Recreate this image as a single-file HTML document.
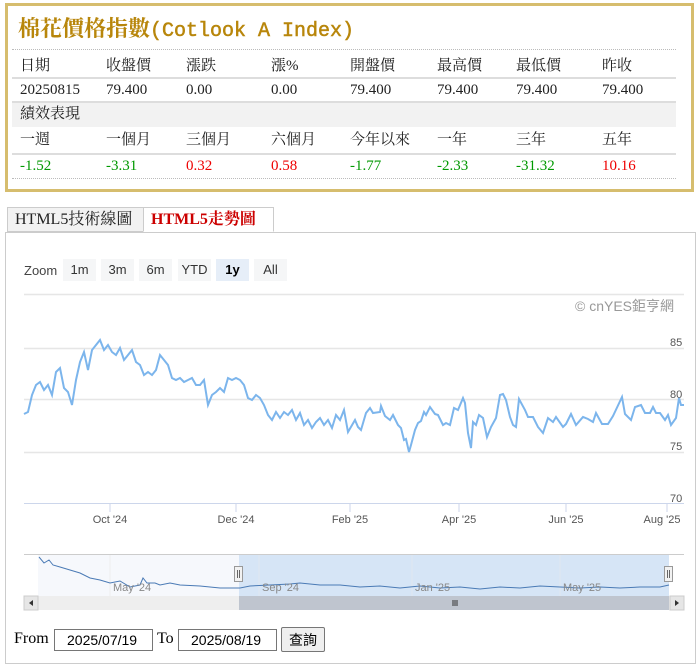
<!DOCTYPE html>
<html><head><meta charset="utf-8"><style>
body{margin:0;width:696px;height:652px;background:#fff;font-family:"Liberation Serif","Noto Serif CJK SC",serif;position:relative;overflow:hidden}
.box{position:absolute;left:5px;top:3px;width:683px;height:183px;border:3px solid #d6bd6e}
.title{position:absolute;left:18px;top:12px;font-size:22px;color:#b8860b;font-weight:bold;font-family:"Noto Serif CJK TC","Noto Serif CJK SC",serif;white-space:nowrap}
.title span{font-family:"Liberation Mono",monospace;font-weight:normal;font-size:20px;-webkit-text-stroke:0.5px #b8860b}
.row{position:absolute;left:12px;width:664px;height:22px;font-size:15px;color:#222;line-height:22px}
.row span{position:absolute;top:0}
.sep{position:absolute;left:12px;width:664px;border-top:1px dotted #bbb}
.solid{position:absolute;left:12px;width:664px;border-top:2px solid #ddd}
.g{color:#090}.r{color:#e00}
.tab{position:absolute;top:207px;height:25px;border:1px solid #ccc;font-size:16px;line-height:24px;padding:0 7px;box-sizing:border-box}
.btn{position:absolute;top:259px;height:22px;background:#f5f6f7;font:13px "Liberation Sans","DejaVu Sans",sans-serif;color:#333;line-height:22px;text-align:center;width:33px}
.in{position:absolute;top:629px;height:22px;border:1px solid #767676;font:14px "Liberation Sans",sans-serif;line-height:20px;box-sizing:border-box;padding-left:12px;width:99px}
</style></head><body>
<div class="box"></div>
<div class="title">棉花價格指數<span>(Cotlook A Index)</span></div>
<div class="sep" style="top:49px"></div>
<div class="row" style="top:55px"><span style="left:8px">日期</span><span style="left:94px">收盤價</span><span style="left:174px">漲跌</span><span style="left:259px">漲%</span><span style="left:338px">開盤價</span><span style="left:425px">最高價</span><span style="left:504px">最低價</span><span style="left:590px">昨收</span></div>
<div class="solid" style="top:77px"></div>
<div class="row" style="top:79px"><span style="left:8px">20250815</span><span style="left:94px">79.400</span><span style="left:174px">0.00</span><span style="left:259px">0.00</span><span style="left:338px">79.400</span><span style="left:425px">79.400</span><span style="left:504px">79.400</span><span style="left:590px">79.400</span></div>
<div class="solid" style="top:101px"></div>
<div class="row" style="top:103px;background:#f2f2f2;height:24px"><span style="left:8px">績效表現</span></div>
<div class="row" style="top:129px"><span style="left:8px">一週</span><span style="left:94px">一個月</span><span style="left:174px">三個月</span><span style="left:259px">六個月</span><span style="left:338px">今年以來</span><span style="left:425px">一年</span><span style="left:504px">三年</span><span style="left:590px">五年</span></div>
<div class="solid" style="top:153px"></div>
<div class="row" style="top:155px"><span class="g" style="left:8px">-1.52</span><span class="g" style="left:94px">-3.31</span><span class="r" style="left:174px">0.32</span><span class="r" style="left:259px">0.58</span><span class="g" style="left:338px">-1.77</span><span class="g" style="left:425px">-2.33</span><span class="g" style="left:504px">-31.32</span><span class="r" style="left:590px">10.16</span></div>
<div class="sep" style="top:178px"></div>

<div style="position:absolute;left:5px;top:232px;width:689px;height:430px;border:1px solid #ccc"></div>
<div class="tab" style="left:7px;width:137px;background:#f2f2f2;color:#222">HTML5技術線圖</div>
<div class="tab" style="left:143px;width:131px;background:#fff;border-bottom-color:#fff;color:#c00;font-weight:bold">HTML5走勢圖</div>

<div style="position:absolute;left:24px;top:263px;font:13px 'Liberation Sans',sans-serif;color:#444">Zoom</div>
<div class="btn" style="left:63px">1m</div><div class="btn" style="left:101px">3m</div><div class="btn" style="left:139px">6m</div><div class="btn" style="left:178px">YTD</div><div class="btn" style="left:216px;background:#e6eef8;font-weight:bold;color:#000">1y</div><div class="btn" style="left:254px">All</div>

<svg style="position:absolute;left:0;top:0" width="696" height="652" font-family="Liberation Sans, DejaVu Sans, sans-serif">
<g stroke="#e6e6e6" stroke-width="1.5"><line x1="24" y1="294.5" x2="684" y2="294.5"/><line x1="24" y1="348.5" x2="684" y2="348.5"/><line x1="24" y1="399.5" x2="684" y2="399.5"/><line x1="24" y1="452.5" x2="684" y2="452.5"/></g>
<line x1="24" y1="503.5" x2="684" y2="503.5" stroke="#ccd6eb"/>
<g stroke="#ccd6eb"><line x1="110" y1="504" x2="110" y2="512"/><line x1="236" y1="504" x2="236" y2="512"/><line x1="350" y1="504" x2="350" y2="512"/><line x1="459" y1="504" x2="459" y2="512"/><line x1="566" y1="504" x2="566" y2="512"/><line x1="667" y1="504" x2="667" y2="512"/></g>
<g font-size="11" fill="#555"><text x="670" y="346">85</text><text x="670" y="398">80</text><text x="670" y="450">75</text><text x="670" y="502">70</text>
<g text-anchor="middle"><text x="110" y="523">Oct '24</text><text x="236" y="523">Dec '24</text><text x="350" y="523">Feb '25</text><text x="459" y="523">Apr '25</text><text x="566" y="523">Jun '25</text><text x="662" y="523">Aug '25</text></g></g>
<text x="674" y="311" font-size="14" fill="#999" text-anchor="end" font-family="Liberation Sans, Noto Sans CJK TC, sans-serif">© cnYES鉅亨網</text>
<polyline fill="none" stroke="#7cb5ec" stroke-width="2" points="24,414 28,412 32,395 36,385 40,382 44,390 48,385 52,395 56,372 60,368 64,388 68,392 72,405 76,380 80,362 84,352 88,370 92,350 96,345 100,340 104,350 108,345 112,352 116,355 120,348 124,360 128,355 132,350 136,362 140,365 144,375 148,372 152,375 156,370 160,355 164,360 168,365 172,378 176,380 180,378 184,382 188,380 192,378 196,385 200,385 204,380 208,405 212,395 216,392 220,388 224,392 228,378 232,380 236,378 240,380 244,385 248,398 252,400 256,395 260,398 264,405 268,415 272,420 276,412 280,418 284,412 288,415 292,410 296,420 300,413 304,425 308,420 312,428 316,422 320,418 324,425 328,420 332,428 336,415 340,420 344,410 348,432 355,420 358,427 361,430 366,413 370,408 373,413 380,412 381,406 385,416 390,420 393,415 398,425 401,428 404,440 406,439 409,452 411,445 415,430 418,423 421,421 424,412 426,415 430,407 435,414 438,415 443,425 446,423 450,425 454,408 458,410 463,398 465,403 468,433 471,448 473,422 476,425 479,415 483,418 487,437 491,427 496,418 500,395 503,394 506,400 510,417 513,425 516,427 519,399 525,410 528,417 533,417 538,427 543,433 548,418 553,422 556,417 563,427 566,424 571,414 576,425 583,417 588,419 593,422 596,413 602,424 608,424 613,416 622,397 625,414 631,420 635,407 641,405 645,413 650,413 653,407 656,413 660,413 665,420 668,415 671,425 676,418 679,398 681,405 684,405"/>
<line x1="24" y1="554.5" x2="684" y2="554.5" stroke="#ccc"/>
<rect x="38" y="555" width="201" height="41" fill="#f6f8fc"/>
<rect x="239" y="555" width="430" height="41" fill="#cfe0f5" opacity="0.85"/>
<line x1="110" y1="555" x2="110" y2="596" stroke="#eee"/><line x1="259" y1="555" x2="259" y2="596" stroke="#e0e8f0"/><line x1="412" y1="555" x2="412" y2="596" stroke="#e0e8f0"/><line x1="560" y1="555" x2="560" y2="596" stroke="#e0e8f0"/>
<polyline fill="none" stroke="#4a7ab5" stroke-width="1" points="39,557 44,563 49,560 53,565 60,567 70,570 80,573 90,578 100,580 110,583 120,581 130,587 140,585 143,578 147,583 155,583 160,585 170,583 180,585 200,586 220,588 240,588 250,586 270,585 290,584 300,583 320,585 340,585 360,587 380,586 400,588 420,586 440,588 460,587 480,589 500,587 520,588 540,586 560,587 580,588 600,587 620,588 640,587 660,587 669,585"/>
<g font-size="11" fill="#888"><text x="113" y="591">May '24</text><text x="262" y="591">Sep '24</text><text x="415" y="591">Jan '25</text><text x="563" y="591">May '25</text></g>
<rect x="234.5" y="566.5" width="8" height="15" fill="#f2f2f2" stroke="#999"/><line x1="237.5" y1="570" x2="237.5" y2="578" stroke="#666"/><line x1="239.5" y1="570" x2="239.5" y2="578" stroke="#666"/>
<rect x="664.5" y="566.5" width="8" height="15" fill="#f2f2f2" stroke="#999"/><line x1="667.5" y1="570" x2="667.5" y2="578" stroke="#666"/><line x1="669.5" y1="570" x2="669.5" y2="578" stroke="#666"/>
<rect x="24" y="596" width="660" height="14" fill="#eee"/>
<rect x="239" y="596" width="430" height="14" fill="#bfc5cf"/>
<line x1="453" y1="600" x2="453" y2="606" stroke="#333"/><line x1="455" y1="600" x2="455" y2="606" stroke="#333"/><line x1="457" y1="600" x2="457" y2="606" stroke="#333"/>
<rect x="24" y="596" width="14" height="14" fill="#e6e6e6" stroke="#ccc"/><path d="M33,600 L29,603 L33,606Z" fill="#333"/>
<rect x="670" y="596" width="14" height="14" fill="#e6e6e6" stroke="#ccc"/><path d="M675,600 L679,603 L675,606Z" fill="#333"/>
</svg>

<div style="position:absolute;left:14px;top:630px;font-size:16px">From</div>
<div class="in" style="left:54px">2025/07/19</div>
<div style="position:absolute;left:157px;top:630px;font-size:16px">To</div>
<div class="in" style="left:178px">2025/08/19</div>
<div style="position:absolute;left:281px;top:627px;width:44px;height:25px;border:1px solid #767676;border-radius:2px;background:#efefef;font:14px 'Noto Sans CJK TC',sans-serif;text-align:center;line-height:24px;box-sizing:border-box">查詢</div>
</body></html>
